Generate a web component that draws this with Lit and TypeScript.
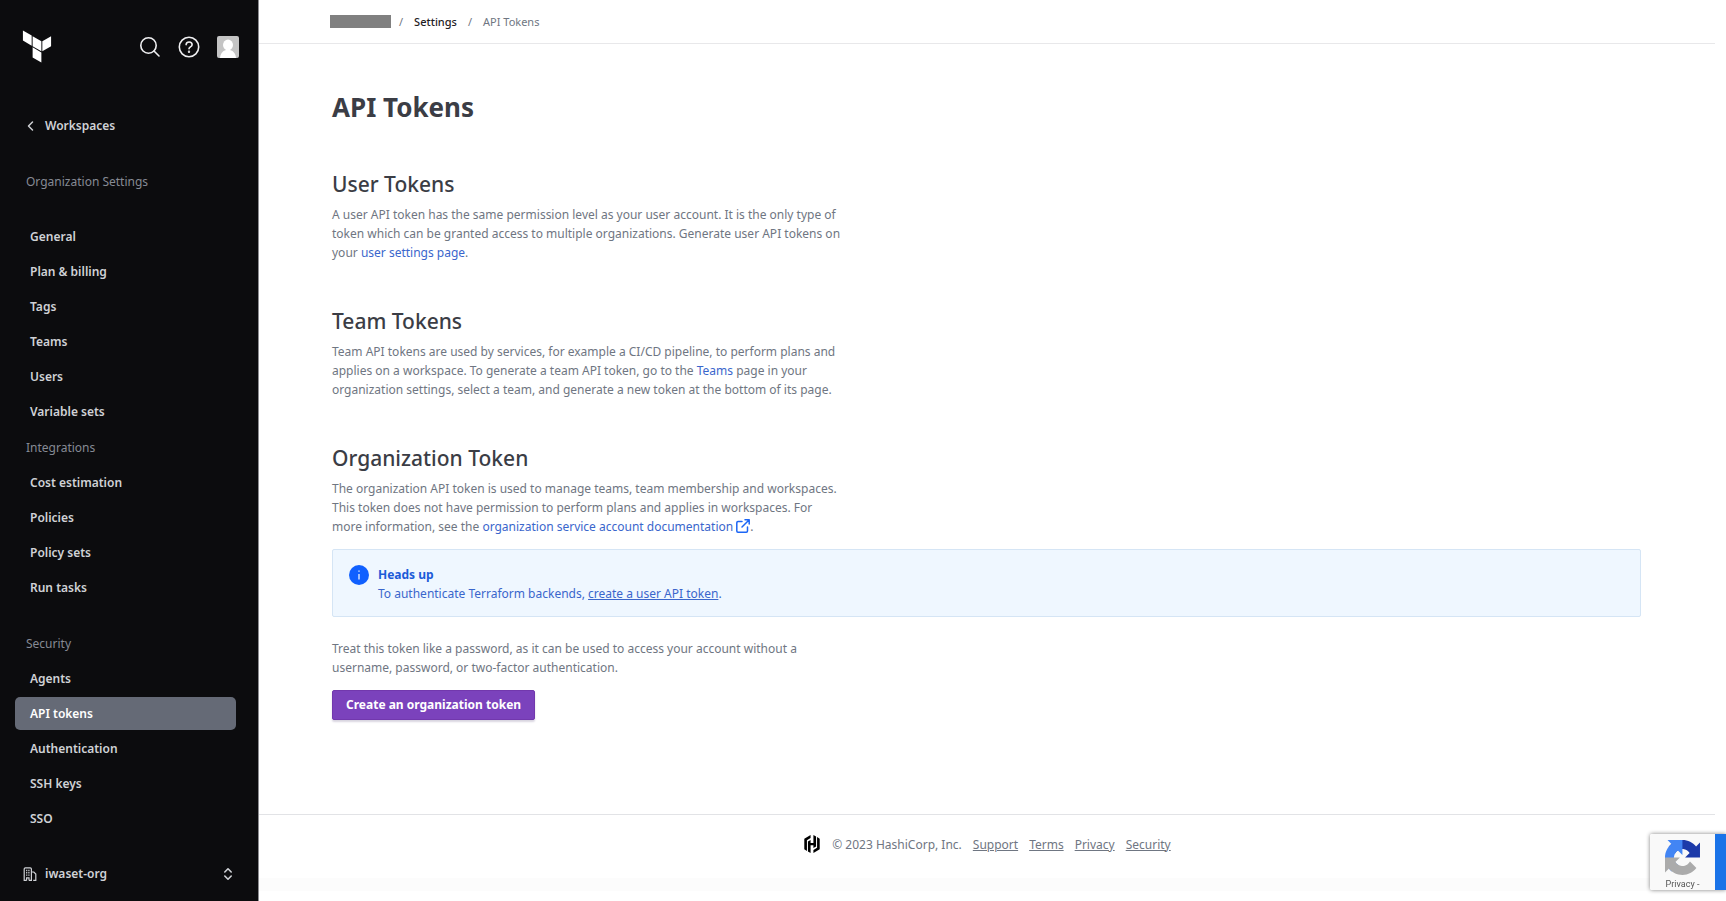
import { LitElement, html, css } from "lit";
import { customElement } from "lit/decorators.js";
import { classMap } from "lit/directives/class-map.js";

const FONT = css`"Noto Sans", "Open Sans", sans-serif`;

const MAIN_LINKS = ["General", "Plan & billing", "Tags", "Teams", "Users", "Variable sets"];
const INTEGRATIONS = ["Cost estimation", "Policies", "Policy sets", "Run tasks"];
const SECURITY = ["Agents", "API tokens", "Authentication", "SSH keys", "SSO"];

@customElement("side-nav")
class SideNav extends LitElement {
  static styles = css`
    :host {
      display: flex;
      flex-direction: column;
      box-sizing: border-box;
      min-height: 100vh;
      padding: 30px 19px 13px 15px;
      background: #0c0c0e;
      border-right: 1px solid #8c8c90;
      font: 600 12px/18px ${FONT};
      color: #d0d2d6;
    }
    a { color: inherit; text-decoration: none; }
    button {
      display: flex;
      padding: 0;
      border: 0;
      background: none;
      color: #efeff1;
      font: inherit;
    }
    svg { display: block; }
    .top { display: flex; align-items: center; gap: 17px; padding-left: 6px; }
    .home { margin-right: auto; color: #fff; }
    .back {
      display: flex;
      align-items: center;
      gap: 7px;
      margin-top: 54px;
      padding-left: 8px;
    }
    .label {
      margin: 0;
      padding: 0 11px;
      font-weight: 400;
      line-height: 33px;
      color: #868a94;
    }
    .label.org { margin: 30px 0 22px; }
    nav { display: flex; flex-direction: column; gap: 23px; margin-right: 3px; }
    .group { display: flex; flex-direction: column; gap: 2px; }
    .group.near { margin-top: -20px; }
    .link { padding: 0 15px; line-height: 33px; border-radius: 5px; }
    .link.active { background: #656a76; color: #fff; }
    .switch {
      align-items: center;
      gap: 8px;
      width: 100%;
      margin-top: auto;
      padding: 0 6px 0 8px;
      line-height: 28px;
      color: #d0d2d6;
    }
    .switch .caret { margin-left: auto; }
  `;

  private link(text: string) {
    const active = text === "API tokens";
    return html`<a class=${classMap({ link: true, active })} href="#">${text}</a>`;
  }

  render() {
    return html`
      <div class="top">
        <a class="home" href="#" aria-label="Terraform Cloud">
          <svg width="32" height="33" viewBox="0 0 24 24" fill="currentColor">
            <path d="M1.44 0v7.575l6.561 3.79V3.787zM22.56 4.227l-6.561 3.791v7.574l6.56-3.787zM8.72 4.23v7.575l6.561 3.787V8.018zM8.72 12.6v7.575L15.28 24v-7.578z" />
          </svg>
        </a>
        <button aria-label="Search">
          <svg width="22" height="22" viewBox="0 0 22 22" fill="none" stroke="currentColor" stroke-width="1.6" stroke-linecap="round">
            <circle cx="9.5" cy="9.5" r="7.7" /><path d="M15 15l5 5" />
          </svg>
        </button>
        <button aria-label="Help">
          <svg width="22" height="22" viewBox="0 0 22 22" fill="none" stroke="currentColor" stroke-width="1.6" stroke-linecap="round">
            <circle cx="11" cy="11" r="9.7" />
            <path d="M8.1 8.6c.2-1.6 1.4-2.6 3-2.6 1.7 0 3 1.1 3 2.7 0 2.2-3.1 2.2-3.1 4.1" />
            <circle cx="11" cy="15.8" r=".4" />
          </svg>
        </button>
        <button aria-label="User menu">
          <svg width="22" height="22" viewBox="0 0 22 22">
            <rect width="22" height="22" rx="2" fill="#c4c4c4" />
            <ellipse cx="11" cy="9" rx="5" ry="5.4" fill="#fff" />
            <path d="M3 22c.2-4 2.2-7 6-8h4c3.8 1 5.8 4 6 8z" fill="#fff" />
          </svg>
        </button>
      </div>
      <a class="back" href="#">
        <svg width="15" height="16" viewBox="0 0 15 16" fill="none" stroke="currentColor" stroke-width="1.5" stroke-linecap="round" stroke-linejoin="round">
          <path d="M9.5 4L5.5 8l4 4" />
        </svg>
        Workspaces
      </a>
      <p class="label org">Organization Settings</p>
      <nav aria-label="Organization settings">
        <div class="group">${MAIN_LINKS.map((t) => this.link(t))}</div>
        <div class="group near">
          <p class="label">Integrations</p>
          ${INTEGRATIONS.map((t) => this.link(t))}
        </div>
        <div class="group">
          <p class="label">Security</p>
          ${SECURITY.map((t) => this.link(t))}
        </div>
      </nav>
      <button class="switch">
        <svg width="14" height="14" viewBox="0 0 14 14" fill="none" stroke="currentColor" stroke-width="1.2">
          <path d="M1.2 13.5V2q0-1.2 1.2-1.2h4.8q1.2 0 1.2 1.2v11.5M8.4 5h2.4l2 2v6.3h-2.6M3.6 13.5v-2.7h2.4v2.7M.6 13.4h3M6 13.4h3" />
          <path d="M3.7 2.8v6M5.9 2.8v6" stroke-dasharray="1.4 .9" />
        </svg>
        iwaset-org
        <svg class="caret" width="10" height="14" viewBox="0 0 10 14" fill="none" stroke="currentColor" stroke-width="1.6" stroke-linecap="round" stroke-linejoin="round">
          <path d="M1.8 5L5 1.8 8.2 5M1.8 9L5 12.2 8.2 9" />
        </svg>
      </button>
    `;
  }
}

@customElement("captcha-badge")
class CaptchaBadge extends LitElement {
  static styles = css`
    :host {
      position: fixed;
      right: 0;
      bottom: 11px;
      display: flex;
      height: 56px;
      box-shadow: 0 0 4px #808080;
      border-radius: 2px 0 0 2px;
    }
    .face {
      display: flex;
      flex-direction: column;
      align-items: center;
      gap: 4px;
      width: 65px;
      padding-top: 6px;
      box-sizing: border-box;
      background: #f9f9f9;
      border-radius: 2px 0 0 2px;
      font: 9px/10px Roboto, sans-serif;
      color: #555;
    }
    .face a { color: inherit; text-decoration: none; }
    .edge { width: 11px; background: #1a73e8; }
  `;

  render() {
    return html`
      <div class="face">
        <svg width="35" height="35" viewBox="0 0 64 64">
          <path fill="#1c3aa9" d="M64 31.955l-.033-1.37V4.687l-7.16 7.16C50.948 4.674 42.033.093 32.05.093c-10.4 0-19.622 4.96-25.458 12.64l11.736 11.86a15.55 15.55 0 0 1 4.754-5.334c2.05-1.6 4.952-2.906 8.968-2.906.485 0 .86.057 1.135.163 4.976.393 9.288 3.14 11.828 7.124l-8.307 8.307L64 31.953" />
          <path fill="#4285f4" d="M31.862.094l-1.37.033H4.594l7.16 7.16C4.58 13.147 0 22.06 0 32.046c0 10.4 4.96 19.622 12.64 25.458L24.5 45.768a15.55 15.55 0 0 1-5.334-4.754c-1.6-2.05-2.906-4.952-2.906-8.968 0-.485.057-.86.163-1.135.393-4.976 3.14-9.288 7.124-11.828l8.307 8.307L31.86.095" />
          <path fill="#ababab" d="M.001 32.045l.033 1.37v25.898l7.16-7.16c5.86 7.173 14.774 11.754 24.76 11.754 10.4 0 19.622-4.96 25.458-12.64l-11.736-11.86a15.55 15.55 0 0 1-4.754 5.334c-2.05 1.6-4.952 2.906-8.968 2.906-.485 0-.86-.057-1.135-.163-4.976-.393-9.288-3.14-11.828-7.124l8.307-8.307c-10.522.04-22.4.066-27.295-.005" />
        </svg>
        <span><a href="#">Privacy</a> -</span>
      </div>
      <div class="edge"></div>
    `;
  }
}

@customElement("app-root")
class AppRoot extends LitElement {
  static styles = css`
    :host {
      display: grid;
      grid-template-columns: 259px minmax(0, 1fr);
      min-height: 100vh;
      background: #fff;
      font: 12px/19px ${FONT};
      color: #6f7682;
    }
    .page {
      display: flex;
      flex-direction: column;
      margin-right: 11px;
      padding-bottom: 10px;
    }
    a { color: #3a66cc; text-decoration: none; }
    .crumbs {
      display: flex;
      align-items: center;
      gap: 11px;
      height: 43px;
      padding-left: 71px;
      border-bottom: 1px solid #e8e8ea;
      font-size: 11px;
    }
    .crumbs .root { display: flex; align-items: center; gap: 8px; }
    .crumbs .org { width: 61px; height: 13px; background: #808080; }
    .crumbs .parent { color: #1f2124; font-weight: 500; }
    .content { flex: 1; padding: 43px 74px 32px 73px; }
    h1 { margin: 0 0 41px; font: 700 26px/40px ${FONT}; color: #3b3d45; }
    h2 { margin: 0 0 5px; font: 500 21px/32px ${FONT}; color: #3b3d45; }
    section { margin-bottom: 43px; }
    section:last-child { margin-bottom: 0; }
    p { margin: 0; max-width: 520px; }
    .external { display: inline-block; vertical-align: -2px; }
    .alert {
      display: flex;
      gap: 9px;
      margin: 13px 0 22px;
      padding: 15px 16px 13px;
      border: 1px solid #d5e5f5;
      border-radius: 2px;
      background: #eff7ff;
      color: #3a66cc;
    }
    .alert strong { display: block; font-weight: 700; color: #1c5bd8; }
    .alert a { text-decoration: underline; }
    .create {
      margin-top: 13px;
      padding: 0 13px;
      height: 30px;
      border: 1px solid #7238ad;
      border-radius: 2px;
      background: #7b42bc;
      box-shadow: 0 2px 2px #d9d5e0;
      font: 700 12px/28px ${FONT};
      color: #fff;
    }
    footer {
      display: flex;
      align-items: center;
      justify-content: center;
      gap: 11px;
      height: 58px;
      padding-bottom: 5px;
      border-top: 1px solid #e2e3e6;
    }
    footer a { color: #6f7682; text-decoration: underline; }
    .strip { height: 13px; background: #fcfcfc; }
  `;

  render() {
    return html`
      <side-nav></side-nav>
      <div class="page">
        <nav class="crumbs" aria-label="Breadcrumb">
          <span class="root"><span class="org"></span>/</span>
          <a class="parent" href="#">Settings</a>
          <span>/</span>
          <span>API Tokens</span>
        </nav>
        <main class="content">
          <h1>API Tokens</h1>
          <section>
            <h2>User Tokens</h2>
            <p>
              A user API token has the same permission level as your user account. It is the only type of<br />
              token which can be granted access to multiple organizations. Generate user API tokens on<br />
              your <a href="#">user settings page</a>.
            </p>
          </section>
          <section>
            <h2>Team Tokens</h2>
            <p>
              Team API tokens are used by services, for example a CI/CD pipeline, to perform plans and<br />
              applies on a workspace. To generate a team API token, go to the <a href="#">Teams</a> page in your<br />
              organization settings, select a team, and generate a new token at the bottom of its page.
            </p>
          </section>
          <section>
            <h2>Organization Token</h2>
            <p>
              The organization API token is used to manage teams, team membership and workspaces.<br />
              This token does not have permission to perform plans and applies in workspaces. For<br />
              more information, see the
              <a href="#">organization service account documentation
                <svg class="external" width="14" height="14" viewBox="0 0 14 14" fill="none" stroke="#1c66f5" stroke-width="1.5" stroke-linecap="round" stroke-linejoin="round"><path d="M11.5 8v4q0 1.2-1.2 1.2H2q-1.2 0-1.2-1.2V3.8q0-1.2 1.2-1.2h4M9 .8h4.2V5M13 1L6 8" /></svg></a>.
            </p>
            <div class="alert" role="note">
              <svg width="20" height="20" viewBox="0 0 20 20">
                <circle cx="10" cy="10" r="10" fill="#1060ff" />
                <path d="M10 9v5.5M10 5.6v1.2" stroke="#dce9ff" stroke-width="1.4" />
              </svg>
              <div>
                <strong>Heads up</strong>
                To authenticate Terraform backends, <a href="#">create a user API token</a>.
              </div>
            </div>
            <p>
              Treat this token like a password, as it can be used to access your account without a<br />
              username, password, or two-factor authentication.
            </p>
            <button class="create">Create an organization token</button>
          </section>
        </main>
        <footer>
          <svg width="18" height="18" viewBox="0 0 24 24" fill="#000">
            <path d="M10.114 0L1.725 4.846v14.31l3.52 2.035V6.88l4.87-2.812zM13.887 0v10.5h-3.773V6.598l-3.52 2.034v13.34L10.114 24V13.515h3.773v3.889l3.52-2.029V2.03zM18.757 2.81v14.31l-4.87 2.81V24l8.388-4.844V4.844z" />
          </svg>
          <span>© 2023 HashiCorp, Inc.</span>
          <a href="#">Support</a>
          <a href="#">Terms</a>
          <a href="#">Privacy</a>
          <a href="#">Security</a>
        </footer>
        <div class="strip"></div>
      </div>
      <captcha-badge></captcha-badge>
    `;
  }
}
